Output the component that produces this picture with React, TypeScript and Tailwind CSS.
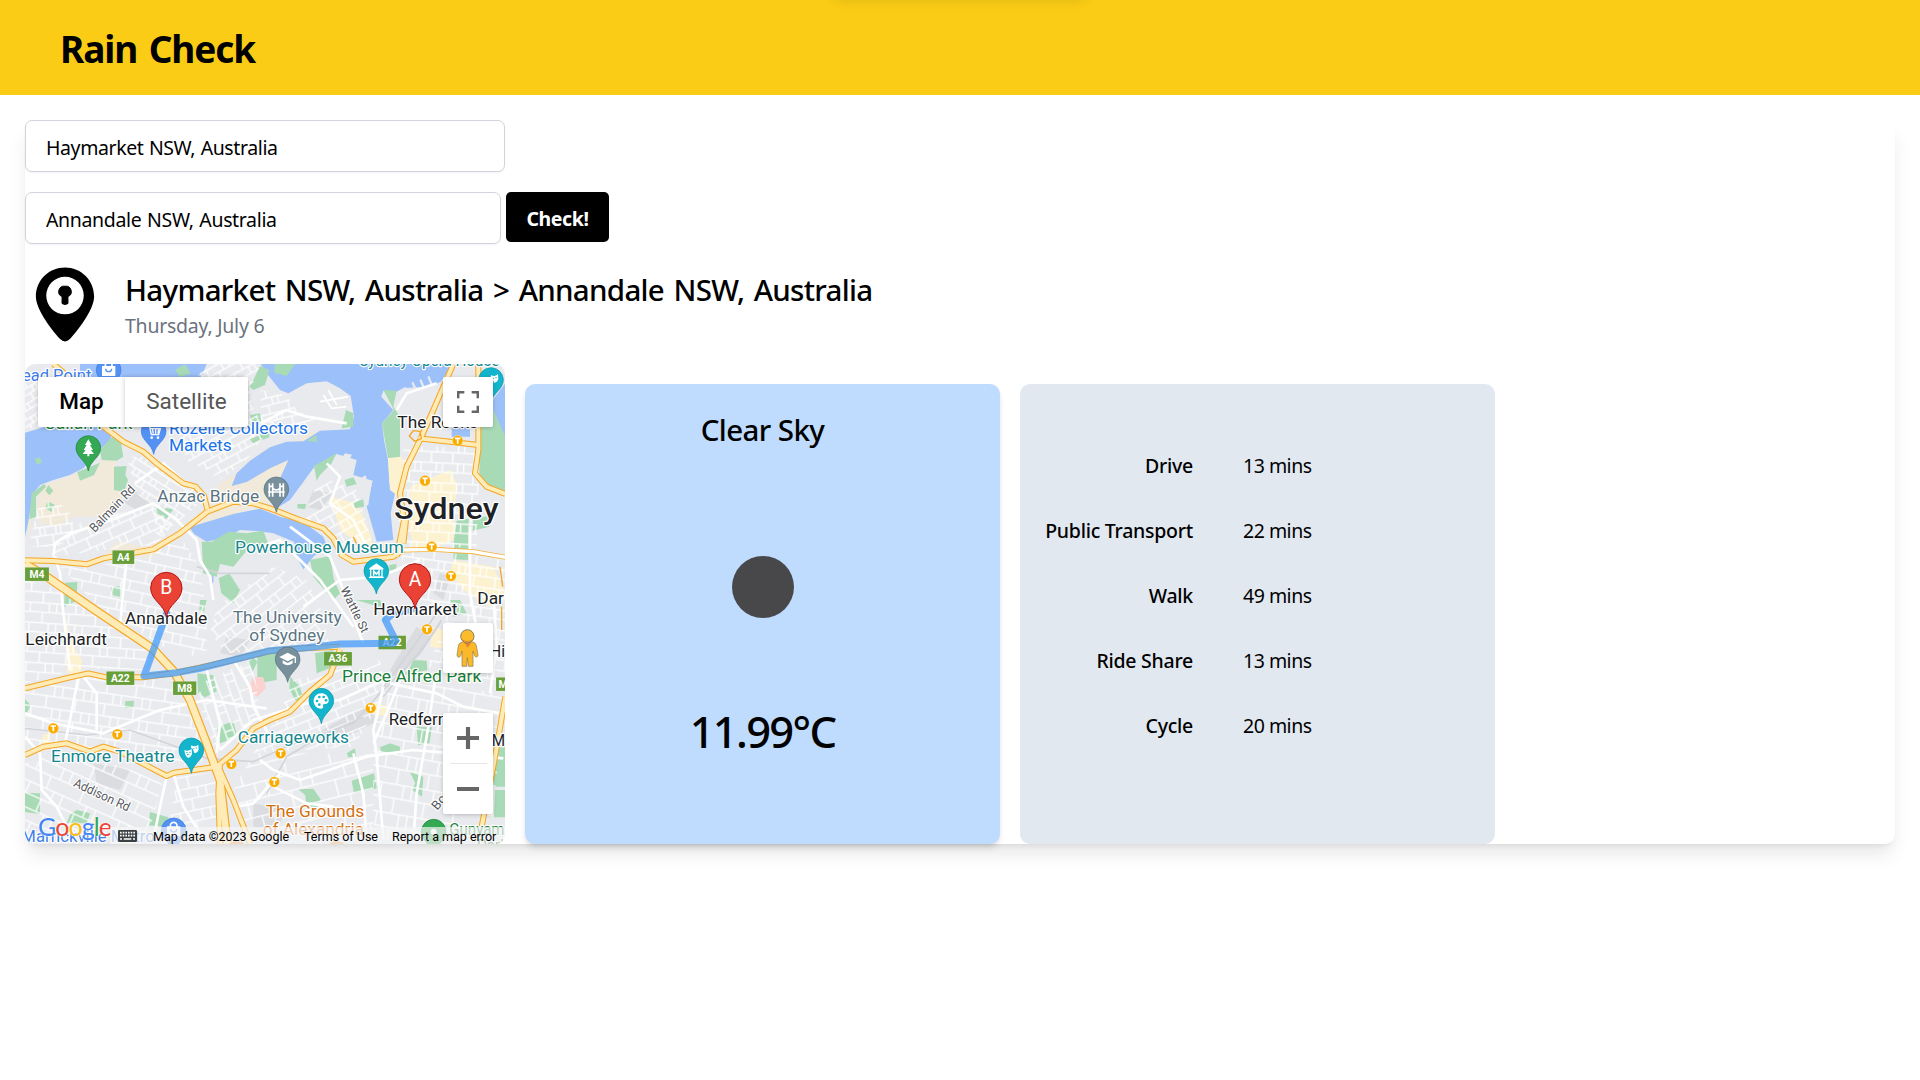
import React from "react";

const WATER = "#9cc0f9";
const GREEN = "#a8dab5";
const TEAL = "#12878f";
const BLUE = "#1a73e8";
const PARK = "#188038";
const SLATE = "#5b7583";
const INK = "#202124";

const waters = [
  "15,218 75,200 275,200 272,240 240,268 190,325 150,345 100,360 60,375 40,400 22,500 15,530",
  "180,12 560,12 540,60 180,60",
  "635,378 650,340 690,302 750,262 800,245 850,244 900,212 950,210 990,208 1002,170 992,108 960,85 920,64 860,70 805,100 780,90 740,40 722,12 1300,12 1262,65 1230,80 1150,84 1128,96 1090,92 1084,110 1120,150 1086,190 1092,240 1104,300 1108,370 1126,395 1112,460 1120,540 1070,545 1040,440 1058,362 1000,345 1010,300 950,282 885,318 810,420 770,445 760,400 805,300 750,325 680,366",
  "508,502 580,480 640,462 720,446 780,470 850,486 910,530 920,555 880,590 850,628 830,590 822,545 760,520 700,512 660,510 620,532 560,545 522,522",
  "1418,120 1456,70 1456,230 1428,205 1410,160",
  "578,560 583,560 580,668 576,668",
];

const greens = [
  "240,270 275,232 300,232 310,290 290,302 245,300",
  "282,320 320,318 316,345 324,360 312,396 282,390",
  "172,336 240,308 222,345 180,362",
  "35,400 72,372 78,380 48,410 48,470 28,478",
  "85,375 100,392 88,406 76,392",
  "82,424 104,434 94,456 76,444",
  "44,296 60,292 66,308 52,314",
  "465,30 495,12 512,40 480,52",
  "690,80 720,18 748,30 735,75 700,90",
  "690,165 720,160 724,190 700,200",
  "690,238 748,212 748,232 700,250",
  "410,440 460,448 440,476 412,460",
  "545,545 575,545 625,515 680,520 730,512 748,560 690,560 640,620 600,612 590,650 550,640",
  "596,655 628,640 660,690 640,728 604,700",
  "135,668 172,666 170,722 132,740",
  "272,682 300,678 300,710 278,706",
  "765,12 825,12 800,48 762,38",
  "978,150 1000,160 1000,200 965,205",
  "860,242 890,225 890,246",
  "882,318 950,280 935,310 900,345 890,362",
  "1090,90 1130,92 1120,140 1140,170 1140,290 1104,294 1086,190 1122,150",
  "1376,180 1420,150 1456,230 1456,395 1400,380 1378,340",
  "974,360 1000,352 1010,372 980,380",
  "1000,428 1030,418 1032,440 1005,445",
  "832,432 858,432 855,448 832,445",
  "870,600 930,588 942,660 960,700 940,720 880,650",
  "1310,482 1346,476 1344,600 1300,598 1302,540",
  "1360,470 1408,470 1408,500 1358,512",
  "1108,615 1130,612 1128,630 1108,632",
  "1008,720 1080,720 1100,760 1090,790 1090,744",
  "540,720 560,720 552,755 538,750",
  "532,940 580,946 590,994 556,1012 534,1000",
  "316,1024 342,1022 340,1044 314,1044",
  "590,1102 640,1084 652,1130 600,1150",
  "15,1018 32,1036 15,1070",
  "15,1298 60,1300 60,1362 15,1356",
  "170,1350 210,1360 200,1390 140,1390 150,1364",
  "390,1356 445,1372 430,1400 386,1396",
  "684,910 700,892 712,905 698,935",
  "712,880 740,866 770,880 770,960 712,970",
  "885,880 940,870 940,920 890,940",
  "810,950 840,980 852,1026 825,1020 808,985",
  "1180,900 1220,902 1222,930 1150,946 1170,922",
  "995,1262 1062,1240 1070,1285 1002,1300",
  "1190,1100 1236,1102 1228,1150 1194,1156",
  "1170,1236 1210,1250 1206,1310 1176,1290 1186,1270",
  "835,1288 880,1286 902,1318 890,1345 858,1334 856,1306",
  "1080,1162 1110,1150 1140,1160 1140,1180 1084,1175",
  "980,1180 1005,1165 1008,1190 985,1192",
  "1425,1165 1456,1160 1456,1280 1420,1280",
  "1425,1290 1456,1290 1456,1372 1422,1372",
  "1290,720 1320,720 1340,760 1300,770",
];

const tans = [
  "22,540 28,480 50,440 62,378 150,350 190,328 178,360 222,348 242,298 290,302 282,390 318,400 350,346 300,440 230,470 160,470 110,500 60,490 50,440",
  "290,545 380,560 410,550 470,512 560,440 640,405 700,310 750,318 805,298 800,345 780,380 810,420 760,425 700,440 640,465 580,480 500,510 430,560 400,590 250,590",
  "600,370 650,340 690,300 750,262 820,248 880,212 900,225 870,244 800,262 700,330 640,400 560,420",
];

const yellows = [
  "1104,294 1145,290 1160,330 1150,420 1110,390",
  "1170,380 1290,330 1310,370 1300,540 1250,560 1180,570 1165,480",
  "930,410 1010,430 1050,520 1060,570 1010,545 960,510",
  "135,770 160,860 185,900 185,945 142,940 140,860",
  "1300,600 1420,620 1456,700 1410,740 1330,690 1290,640",
  "1240,800 1330,830 1370,960 1340,970 1300,870 1230,860",
  "68,1125 90,1120 92,1150 66,1160",
  "1060,1030 1110,1040 1100,1070 1050,1060",
];

const greys = [
  "330,380 400,430 350,450 300,420",
  "880,390 940,400 900,450 860,440",
  "620,830 690,840 660,890 600,880",
  "220,1210 330,1230 300,1290 230,1270",
  "1030,1040 1080,1080 980,1130 890,1120",
  "1190,800 1230,830 1130,960 1110,930",
  "700,1330 800,1350 770,1410 700,1400",
  "1260,640 1290,650 1270,720 1240,700",
];

/** Residential blocks: polygon, rotation and block size of the local streets. */
const districts: { area: string; angle: number; w: number; h: number }[] = [
  { area: "15,60 62,60 62,190 15,220", angle: -32, w: 26, h: 20 },
  { area: "560,12 722,12 690,90 700,160 760,190 740,220 680,300 600,360 560,330 500,300 460,150", angle: -28, w: 34, h: 24 },
  { area: "320,290 400,290 520,390 540,430 410,540 400,450 350,400", angle: 32, w: 30, h: 22 },
  { area: "60,420 120,430 160,470 160,530 110,560 25,560 40,500", angle: -8, w: 24, h: 28 },
  { area: "190,480 400,440 470,500 400,555 250,570 100,590 110,550", angle: -24, w: 36, h: 30 },
  { area: "15,660 90,680 240,770 400,880 370,930 190,925 15,970", angle: 4, w: 40, h: 30 },
  { area: "120,620 280,610 480,530 540,620 560,760 560,900 430,860 240,745", angle: 12, w: 46, h: 32 },
  { area: "590,740 690,670 760,620 860,660 900,740 930,860 620,880 570,820", angle: -38, w: 42, h: 30 },
  { area: "15,990 200,950 460,960 540,1100 560,1200 440,1230 300,1160 15,1170", angle: 8, w: 44, h: 34 },
  { area: "15,1210 140,1170 430,1260 380,1440 15,1440", angle: 24, w: 54, h: 38 },
  { area: "470,1250 590,1235 640,1440 440,1440", angle: -12, w: 46, h: 34 },
  { area: "560,960 700,900 720,1070 590,1180 530,1010", angle: 70, w: 40, h: 28 },
  { area: "820,960 1080,900 1100,1000 1000,1160 700,1180 780,1060", angle: -22, w: 44, h: 26 },
  { area: "700,1180 1060,1180 1060,1440 690,1440 640,1290", angle: -14, w: 68, h: 50 },
  { area: "1080,960 1456,1000 1410,1440 1060,1440 1060,1130", angle: 10, w: 46, h: 44 },
  { area: "1140,560 1456,600 1456,980 1220,920 1280,780 1160,700", angle: 8, w: 32, h: 30 },
  { area: "1150,260 1380,260 1370,560 1130,570", angle: 3, w: 32, h: 30 },
  { area: "900,350 1010,390 1060,560 960,560 850,470", angle: -30, w: 38, h: 30 },
  { area: "722,90 800,105 830,150 900,190 800,200 722,190", angle: -14, w: 30, h: 24 },
];

const streets = [
  "100,590 105,550 150,520 260,485 400,430 470,480 530,540 540,600 570,650 580,720",
  "345,370 430,310 520,390",
  "105,590 120,640 128,740 150,930",
  "320,600 310,690 300,800",
  "175,950 150,1080 135,1150",
  "15,1060 100,1090 250,1120 420,1050 560,1020 740,1045",
  "190,950 230,1000 230,1110",
  "640,900 690,980 700,1040 750,1130",
  "560,930 600,1090 590,1180",
  "720,1200 760,1230 840,1260 900,1240 1040,1190 1180,1170 1300,1180 1450,1195",
  "1090,980 1060,1110 1070,1190 1090,1440",
  "1140,960 1100,1060 1060,1150",
  "1110,970 1250,1000 1330,1040 1440,1060",
  "1245,960 1225,1100 1190,1300 1180,1440",
  "1350,500 1350,700 1380,860",
  "720,560 780,540 900,660 1000,800",
  "810,500 930,590 970,690 1010,800 1030,850",
  "850,740 960,660 1080,650 1200,600",
  "600,1170 700,1080 860,1030 960,1020 1090,960",
  "780,1240 700,1330 650,1340",
  "760,1280 860,1330 940,1340",
  "920,310 960,350 930,430 1000,480 1040,560",
  "1130,150 1160,100 1250,70",
  "15,1130 60,1180 65,1290 110,1340 160,1440",
  "440,1250 420,1340 400,1440",
  "460,1240 490,1340 540,1420",
  "1420,700 1430,860 1410,1000",
  "1000,1180 1030,1300 1040,1440",
  "722,190 800,150 860,170 980,190",
];

const railways = [
  "15,1105 200,1125 330,1110 440,1150 560,1195 700,1205 800,1160 880,1130 1000,1090 1080,1000 1200,880 1260,790",
  "740,1300 800,1190 900,1130 1030,1070",
  "1070,1010 1180,860 1250,760",
  "1090,1010 1210,860 1265,780",
  "530,620 600,640 750,640",
];

const highways = [
  "100,12 145,50 250,200 310,245 370,275 412,312 490,370 527,380 552,408 562,448",
  "15,601 100,603 200,613 250,595 400,568 480,520 562,455 640,425 700,430 750,445 840,480 910,505 940,535 965,585 1000,605 1120,590 1150,570",
  "15,1185 70,1160 140,1150 210,1175 250,1160 300,1175 440,1248 462,1238 590,1220 650,1170 700,1105 750,1080 810,1055 870,995 930,945 960,868",
  "15,985 150,952 205,940 260,952 370,952 470,938 620,905 750,873 860,864 960,860",
  "1195,235 1290,245 1375,255",
  "1300,12 1240,150 1200,240 1160,320 1140,400 1152,480 1140,540 1130,590",
  "1375,12 1375,270 1365,340 1400,380 1456,402",
  "600,1230 640,1320 690,1450",
  "600,1210 595,1300 600,1450",
  "1456,1010 1420,1220 1385,1400",
  "1150,550 1158,480",
];

const motorway = "15,612 80,650 225,750 400,868 462,935 510,1020 560,1150 600,1260 622,1450";
const route = "440,760 372,948 470,938 540,925 620,905 750,872 860,863 960,852 1120,850 1127,842 1096,780 1120,760 1185,745";

type LabelProps = {
  x: number;
  y: number;
  len?: number;
  size?: number;
  color?: string;
  rotate?: number;
  weight?: number;
  children: string;
};

function Label({ x, y, len, size = 47, color = INK, rotate = 0, weight = 400, children }: LabelProps) {
  return (
    <text
      x={x}
      y={y}
      textLength={len}
      lengthAdjust="spacingAndGlyphs"
      fontSize={size}
      fontWeight={weight}
      fill={color}
      stroke="#ffffff"
      strokeWidth={7}
      strokeLinejoin="round"
      paintOrder="stroke"
      transform={rotate ? `rotate(${rotate} ${x} ${y})` : undefined}
    >
      {children}
    </text>
  );
}

function Shield({ x, y, w, children }: { x: number; y: number; w: number; children: string }) {
  return (
    <g>
      <rect x={x} y={y} width={w} height={41} fill="#689f38" stroke="#fff" strokeOpacity={0.5} strokeWidth={1} />
      <text x={x + w / 2} y={y + 31} textAnchor="middle" fontSize={31} fontWeight={700} fill="#fff">
        {children}
      </text>
    </g>
  );
}

function Pin({ x, y, color, edge, children }: { x: number; y: number; color: string; edge: string; children?: React.ReactNode }) {
  return (
    <g transform={`translate(${x} ${y})`}>
      <path d="M0 69C-5 38-37 28-37 0A37 37 0 0 1 37 0C37 28 5 38 0 69Z" fill={color} stroke={edge} strokeWidth={2} />
      {children}
    </g>
  );
}

function Marker({ x, y, children }: { x: number; y: number; children: string }) {
  return (
    <g transform={`translate(${x} ${y})`}>
      <path d="M0 88C-5 48-47 38-47 0A47 47 0 0 1 47 0C47 38 5 48 0 88Z" fill="#ea4335" stroke="#b31412" strokeWidth={3} />
      <text x={0} y={19} textAnchor="middle" fontSize={58} fill="#fff">
        {children}
      </text>
    </g>
  );
}

function Station({ x, y }: { x: number; y: number }) {
  return (
    <g>
      <circle cx={x} cy={y} r={16} fill="#f9ab00" stroke="#fff" strokeWidth={1} />
      <path d={`M${x - 8} ${y - 7}h16M${x} ${y - 7}v16`} stroke="#fff" strokeWidth={5} fill="none" />
    </g>
  );
}

const bag = (
  <g>
    <path d="M-20-12H20V18H-20Z" fill="#fff" />
    <path d="M-10-10V-14A10 10 0 0 1 10-14V-10" fill="none" stroke="#fff" strokeWidth={5} />
    <path d="M-9-4A9 9 0 0 0 9-4" fill="none" stroke="#5491f5" strokeWidth={4} />
  </g>
);

const masks = (
  <g fill="#fff">
    <path d="M-21-1Q-10 5 1-4L2 11Q-3 23-10 22Q-19 19-21-1Z" />
    <path d="M0-15Q10-8 21-17L22-2Q17 9 9 8L4-5L-1-7Z" />
    <path d="M-15 7h4M-6 6h4M6-5h3M13-7h4M-13 14q4-4 7-1" stroke="#12b5cb" strokeWidth={3} fill="none" />
  </g>
);

function CityMap() {
  return (
    <svg className="block h-full w-full" viewBox="15 12 1440 1440" fontFamily="Roboto, sans-serif">
      <defs>
        {districts.map((d, i) => (
          <pattern key={i} id={`blocks-${i}`} width={d.w * 2} height={d.h * 2} patternUnits="userSpaceOnUse" patternTransform={`rotate(${d.angle})`}>
            <path d={`M0 2H${d.w * 2}M0 ${d.h}H${d.w * 2}M2 0V${d.h}M${d.w} ${d.h}V${d.h * 2}M${d.w * 1.5} 0V${d.h}`} stroke="#fff" strokeOpacity={0.85} strokeWidth={4.5} fill="none" />
          </pattern>
        ))}
      </defs>
      <rect x={15} y={12} width={1440} height={1440} fill="#e8eaed" />
      {greys.map((p) => (
        <polygon key={p} points={p} fill="#dadce0" />
      ))}
      {tans.map((p) => (
        <polygon key={p} points={p} fill="#f1e9d9" />
      ))}
      {waters.map((p) => (
        <polygon key={p} points={p} fill={WATER} />
      ))}
      {yellows.map((p) => (
        <polygon key={p} points={p} fill="#fdf2d0" />
      ))}
      {/* wharves */}
      <g fill="#e8eaed">
        <path d="M935 335L975 280L996 284L965 345L940 365ZM1018 360L1035 346L1040 352L1018 430L1010 425ZM1040 365L1056 362L1045 435L1034 438Z" />
        <path d="M1150 85L1156 80L1176 120L1168 126ZM1174 68L1180 65L1202 110L1194 114ZM1198 60L1204 58L1222 98L1215 102ZM1222 50L1228 48L1244 88L1238 90Z" />
        <path d="M1130 150L1150 125L1240 92L1262 66L1240 150L1200 240L1150 250L1130 200Z" />
        <path d="M1295 205H1310V180H1350V230H1295Z" fill={WATER} />
      </g>
      {greens.map((p) => (
        <polygon key={p} points={p} fill={GREEN} />
      ))}
      <polygon points="700,950 730,952 738,985 712,1010 674,984 690,975" fill="#fad2cf" />
      {districts.map((d, i) => (
        <polygon key={i} points={d.area} fill={`url(#blocks-${i})`} />
      ))}
      <path d="M900 125L985 110M910 105L935 145L980 140M925 90L950 135" stroke="#fff" strokeWidth={5} fill="none" />
      <g fill="none" stroke="#d3d5da" strokeWidth={5}>
        {railways.map((p) => (
          <polyline key={p} points={p} />
        ))}
      </g>
      <g fill="none" stroke="#fff" strokeWidth={8} strokeLinejoin="round">
        {streets.map((p) => (
          <polyline key={p} points={p} />
        ))}
      </g>
      <g fill="none" strokeLinejoin="round">
        <polyline points="1150,570 1240,568 1360,575 1456,592" stroke="#f6b13a" strokeWidth={15} />
        <polyline points="1150,570 1240,568 1360,575 1456,592" stroke="#fff" strokeWidth={10} />
        <g stroke="#f5a623" strokeWidth={18}>
          {highways.map((p) => (
            <polyline key={p} points={p} />
          ))}
        </g>
        <polyline points={motorway} stroke="#f5a623" strokeWidth={27} />
        <g stroke="#ffebb5" strokeWidth={12}>
          {highways.map((p) => (
            <polyline key={p} points={p} />
          ))}
        </g>
        <polyline points={motorway} stroke="#ffebb5" strokeWidth={20} />
        <path d="M1168 228l12-16 20 2 4 22-20 8zM1000 530l14 30M1440 620l8 60M1445 740v70" stroke="#f5a623" strokeWidth={4} />
      </g>

      <Shield x={277} y={571} w={66}>A4</Shield>
      <Shield x={15} y={622} w={72}>M4</Shield>
      <Shield x={259} y={934} w={84}>A22</Shield>
      <Shield x={459} y={964} w={70}>M8</Shield>
      <Shield x={1075} y={827} w={83}>A22</Shield>
      <Shield x={912} y={876} w={84}>A36</Shield>
      <Shield x={1428} y={952} w={60}>M1</Shield>

      <polyline points={route} fill="none" stroke="#3b97fb" strokeOpacity={0.72} strokeWidth={21} strokeLinejoin="round" strokeLinecap="round" />

      <Station x={1313} y={242} />
      <Station x={1215} y={362} />
      <Station x={1235} y={560} />
      <Station x={1293} y={648} />
      <Station x={100} y={1105} />
      <Station x={292} y={1123} />
      <Station x={634} y={1212} />
      <Station x={1221} y={808} />
      <Station x={1052} y={1044} />
      <Station x={782} y={1180} />
      <Station x={763} y={1266} />

      <Pin x={266} y={30} color="#5491f5" edge="#3a79e0">{bag}</Pin>
      <Pin x={401} y={214} color="#5491f5" edge="#3a79e0">
        <path d="M-20-18h7l6 28h22l5-18h-30M-4-10l3 17M6-10v17M15-10l-2 17" stroke="#fff" strokeWidth={4} fill="none" />
        <circle cx={-6} cy={19} r={4} fill="#fff" />
        <circle cx={13} cy={19} r={4} fill="#fff" />
      </Pin>
      <Pin x={205} y={264} color="#34a853" edge="#188038">
        <path d="M0-26L10-9H5L14 6H8L17 18H3V25H-3V18H-17L-8 6H-14L-5-9H-10Z" fill="#fff" />
      </Pin>
      <Pin x={769} y={388} color="#78909c" edge="#546e7a">
        <path d="M-21-18V22M-11-18V22M11-18V22M21-18V22" stroke="#fff" strokeWidth={5} />
        <path d="M-25 8H25M-21-9H-11M11-9H21M-11-3Q0 7 11-3" stroke="#fff" strokeWidth={5} fill="none" />
      </Pin>
      <Pin x={1069} y={633} color="#12b5cb" edge="#0b93a6">
        <path d="M-21-8L0-23L21-8V-4H-21Z" fill="#fff" />
        <path d="M-17-4V18H17V-4M-22 19H22" stroke="#fff" strokeWidth={4} fill="none" />
        <path d="M-8 14V0L0 9L8 0V14" stroke="#fff" strokeWidth={4.5} fill="none" />
      </Pin>
      <Pin x={803} y={898} color="#78909c" edge="#546e7a">
        <path d="M-25-7L0-20L25-7L0 6ZM-15 3L0 11L15 3V12Q0 24-15 12Z" fill="#fff" />
        <path d="M23-7V11" stroke="#fff" strokeWidth={4} />
      </Pin>
      <Pin x={904} y={1022} color="#12b5cb" edge="#0b93a6">
        <path d="M0-22C-13-22-23-12-23 1S-13 24-1 24C5 24 7 20 5 16S6 10 11 10C19 10 23 4 22-2C21-14 11-22 0-22Z" fill="#fff" />
        <g fill="#12b5cb">
          <circle cx={-13} cy={1} r={4} />
          <circle cx={-6} cy={-11} r={4} />
          <circle cx={7} cy={-11} r={4} />
          <circle cx={14} cy={-1} r={4} />
          <circle cx={-6} cy={12} r={4} />
        </g>
      </Pin>
      <Pin x={514} y={1171} color="#12b5cb" edge="#0b93a6">{masks}</Pin>
      <Pin x={1413} y={60} color="#12b5cb" edge="#0b93a6">{masks}</Pin>
      <Pin x={461} y={1411} color="#5491f5" edge="#3a79e0">{bag}</Pin>
      <Pin x={1241} y={1415} color="#34a853" edge="#188038">
        <circle cx={0} cy={0} r={9} fill="#fff" />
      </Pin>
      <Pin x={950} y={1482} color="#f29a4a" edge="#e37400" />
      <Pin x={650} y={1482} color="#f29a4a" edge="#e37400" />

      <Label x={6} y={63} len={208} color="#3d7de8">ead Point</Label>
      <Label x={1018} y={17} len={420} color={TEAL}>Sydney Opera House</Label>
      <Label x={73} y={207} len={264} color={PARK}>Callan Park</Label>
      <Label x={447} y={223} len={417} color={BLUE}>Rozelle Collectors</Label>
      <Label x={447} y={274} len={188} color={BLUE}>Markets</Label>
      <Label x={412} y={426} len={306} color={SLATE}>Anzac Bridge</Label>
      <Label x={224} y={519} len={178} size={38} color="#55585d" rotate={-46}>Balmain Rd</Label>
      <Label x={1132} y={205} len={242}>The Rocks</Label>
      <Label x={1122} y={477} len={314} size={90} weight={500}>Sydney</Label>
      <Label x={645} y={579} len={506} color={TEAL}>Powerhouse Museum</Label>
      <Label x={961} y={688} len={148} size={36} color="#55585d" rotate={64}>Wattle St</Label>
      <Label x={1372} y={733} len={80}>Dar</Label>
      <Label x={1060} y={764} len={252}>Haymarket</Label>
      <Label x={315} y={792} len={247}>Annandale</Label>
      <Label x={16} y={854} len={245}>Leichhardt</Label>
      <Label x={638} y={790} len={327} color={SLATE}>The University</Label>
      <Label x={688} y={843} len={225} color={SLATE}>of Sydney</Label>
      <Label x={966} y={967} len={418} color={PARK}>Prince Alfred Park</Label>
      <Label x={1410} y={890}>Hi</Label>
      <Label x={1106} y={1095} len={175}>Redfern</Label>
      <Label x={1415} y={1157} len={40}>M</Label>
      <Label x={653} y={1149} len={334} color={TEAL}>Carriageworks</Label>
      <Label x={93} y={1206} len={371} color={TEAL}>Enmore Theatre</Label>
      <Label x={158} y={1278} len={182} size={38} color="#55585d" rotate={25}>Addison Rd</Label>
      <Label x={1252} y={1352} size={38} color="#55585d" rotate={-50}>Bourke</Label>
      <Label x={737} y={1372} len={296} color="#d5700f">The Grounds</Label>
      <Label x={728} y={1424} len={304} color="#d5700f">of Alexandria</Label>
      <Label x={1288} y={1424} len={190} color={PARK}>Gunyama</Label>
      <Label x={1370} y={1474} color={PARK}>Park</Label>
      <Label x={4} y={1445} len={400} color="#3d7de8">Marrickville Metro</Label>

      <Marker x={439} y={684}>B</Marker>
      <Marker x={1185} y={658}>A</Marker>
    </svg>
  );
}

function Pegman() {
  return (
    <svg className="mr-[2px] h-[39px] w-[23px]" viewBox="0 0 69 117">
      <path
        d="M22 38L12 42Q8 45 7 52L3 78Q3 84 8 85Q12 85 14 80L18 66V112H32L34 86L37 112H51V66L56 80Q58 85 62 84Q66 83 66 78L61 50Q60 43 53 40L46 38Z"
        fill="#fbb829"
        stroke="#8a7a52"
        strokeWidth={2}
      />
      <path d="M24 40H46L35 56Z" fill="#e5842b" />
      <circle cx={34} cy={22} r={20} fill="#fbbc2c" stroke="#6b6b6b" strokeWidth={2.5} />
      <path d="M16 31Q34 44 52 31" stroke="#e08a24" strokeWidth={3} fill="none" />
    </svg>
  );
}

function MapPanel() {
  return (
    <section className="relative h-[480px] w-[480px] shrink-0 overflow-hidden rounded-[10px] font-[Roboto,sans-serif]">
      <CityMap />
      <div className="absolute left-[13px] top-[13px] flex h-[50px] text-[22.5px] leading-[48px] shadow-[0_1px_5px_-1px_rgba(0,0,0,0.3)]">
        <button className="flex w-[87px] justify-center rounded-l-[2px] bg-white font-medium text-black">Map</button>
        <button className="flex w-[123px] justify-center rounded-r-[2px] bg-white text-[#565656] shadow-[-1px_0_4px_rgba(0,0,0,0.15)]">Satellite</button>
      </div>
      <div className="absolute right-[12px] top-[13px] flex size-[50px] items-center justify-center rounded-[2px] bg-white shadow-[0_1px_5px_-1px_rgba(0,0,0,0.3)]">
        <svg className="size-[22px]" viewBox="0 0 18 18" fill="#666">
          <path d="M0 0v6h2V2h4V0H0zm16 0h-4v2h4v4h2V0h-2zm0 16h-4v2h6v-6h-2v4zM2 12H0v6h6v-2H2v-4z" />
        </svg>
      </div>
      <div className="absolute right-[12px] top-[259px] flex size-[50px] items-center justify-center rounded-[2px] bg-white shadow-[0_1px_5px_-1px_rgba(0,0,0,0.3)]">
        <Pegman />
      </div>
      <div className="absolute right-[12px] top-[349px] flex h-[101px] w-[50px] flex-col items-center rounded-[2px] bg-white shadow-[0_1px_5px_-1px_rgba(0,0,0,0.3)]">
        <div className="flex h-[50px] items-center justify-center">
          <svg className="size-[22px]" viewBox="0 0 18 18" fill="#666">
            <path d="M18 7.3h-7.3V0H7.3v7.3H0v3.4h7.3V18h3.4v-7.3H18z" />
          </svg>
        </div>
        <div className="h-px w-[37px] bg-[#e6e6e6]" />
        <div className="flex h-[49px] items-center justify-center">
          <div className="h-[4px] w-[22px] bg-[#666]" />
        </div>
      </div>
      <div className="absolute bottom-[3px] left-[13px] text-[25px] leading-[30px] tracking-[-0.9px] font-[Lato,sans-serif] [text-shadow:0_0_2px_#fff,0_0_2px_#fff]">
        <span className="text-[#4285f4]">G</span>
        <span className="text-[#ea4335]">o</span>
        <span className="text-[#fbbc05]">o</span>
        <span className="text-[#4285f4]">g</span>
        <span className="text-[#34a853]">l</span>
        <span className="text-[#ea4335]">e</span>
      </div>
      <div className="absolute bottom-0 right-0 flex h-[17px] items-center bg-[#f5f5f5]/70 pl-[8px] pr-[7px] text-[12.5px] leading-[15px] text-black">
        <svg className="mr-[16px] h-[12px] w-[19px]" viewBox="0 0 57 36">
          <rect width={57} height={36} rx={4} fill="#3c4043" />
          <path d="M6 8h45M6 17h45" stroke="#fff" strokeWidth={5} strokeDasharray="5 3" />
          <path d="M6 27h6M17 27h23M45 27h6" stroke="#fff" strokeWidth={5} />
        </svg>
        <span className="mr-[14px] w-[137px] whitespace-nowrap pt-[2px]">Map data ©2023 Google</span>
        <span className="mr-[15px] w-[73px] whitespace-nowrap pt-[2px]">Terms of Use</span>
        <span className="w-[106px] whitespace-nowrap pt-[2px]">Report a map error</span>
      </div>
    </section>
  );
}

function PlaceIcon() {
  return (
    <svg className="mt-px h-[75px] w-[60px] shrink-0" viewBox="0 0 60 76">
      <path
        fillRule="evenodd"
        d="M30 0.500C46 0.500 59.500 13 59.500 30C59.500 42 46 61 35 73Q30 78 25 73C14 61 0.500 42 0.500 30C0.500 13 14 0.500 30 0.500ZM30 10A19 19 0 1 0 30 48A19 19 0 1 0 30 10Z"
      />
      <path d="M30 19.500A5.500 5.500 0 0 1 33 30V37Q30 39 27 37V30A5.500 5.500 0 0 1 30 19.500Z" stroke="#000" strokeWidth={1} />
    </svg>
  );
}

const modes = [
  { name: "Drive", time: "13 mins" },
  { name: "Public Transport", time: "22 mins" },
  { name: "Walk", time: "49 mins" },
  { name: "Ride Share", time: "13 mins" },
  { name: "Cycle", time: "20 mins" },
];

export default function App() {
  return (
    <div className="min-h-screen overflow-hidden bg-white text-black font-['Noto_Sans','Open_Sans',sans-serif]">
      <header className="relative flex h-[95px] items-center bg-[#facc15] pl-[60px]">
        <div className="absolute left-[835px] top-[-16px] h-[10px] w-[250px] shadow-[0_4px_14px_rgba(0,0,0,0.16)]" />
        <h1 className="pt-[3px] text-[37px] font-bold tracking-[-1.1px] [word-spacing:3px]">Rain Check</h1>
      </header>
      <main className="m-[25px] h-[724px] rounded-[10px] shadow-[0_12.5px_18.75px_-3.75px_rgba(0,0,0,0.1),0_5px_7.5px_-5px_rgba(0,0,0,0.1)]">
        <input
          className="block h-[52px] w-[480px] rounded-[7px] border border-[#d1d5db] bg-white px-[20px] pt-[3px] text-[19.5px] tracking-[-0.4px] [word-spacing:0.8px] shadow-[0_1px_2px_rgba(0,0,0,0.05)] outline-none"
          defaultValue="Haymarket NSW, Australia"
        />
        <div className="mt-5 flex gap-[5px]">
          <input
            className="block h-[52px] w-[476px] rounded-[7px] border border-[#d1d5db] bg-white px-[20px] pt-[3px] text-[19.5px] tracking-[-0.35px] [word-spacing:1px] shadow-[0_1px_2px_rgba(0,0,0,0.05)] outline-none"
            defaultValue="Annandale NSW, Australia"
          />
          <button className="h-[50px] w-[103px] rounded-[5px] bg-black pt-[4px] text-[19.5px] font-bold tracking-[-0.4px] text-white">Check!</button>
        </div>
        <div className="mt-[22px] flex h-[98px] pl-[10px]">
          <PlaceIcon />
          <div className="ml-[30px]">
            <h2 className="mt-[5px] whitespace-nowrap text-[29.5px] font-medium leading-[38px] tracking-[-0.7px] [word-spacing:2.5px]">
              Haymarket NSW, Australia &gt; Annandale NSW, Australia
            </h2>
            <p className="mt-px text-[19.5px] leading-[32px] tracking-[-0.25px] text-[#6b7280]">Thursday, July 6</p>
          </div>
        </div>
        <div className="flex items-end gap-5">
          <MapPanel />
          <section className="flex h-[460px] w-[475px] flex-col items-center rounded-[10px] bg-[#bfdbfe] shadow-[0_5px_7.5px_-1px_rgba(0,0,0,0.1),0_2px_5px_-2px_rgba(0,0,0,0.1)]">
            <h3 className="mt-[25px] text-[29.5px] font-medium leading-[42px] tracking-[-0.6px]">Clear Sky</h3>
            <div className="mt-[105px] size-[62px] rounded-full bg-[#48484a]" />
            <p className="mt-[82px] text-[43.5px] font-medium leading-[62px] tracking-[-1.7px]">11.99°C</p>
          </section>
          <section className="h-[460px] w-[475px] rounded-[10px] bg-[#e2e8f0] pt-[49px]">
            {modes.map((m) => (
              <div key={m.name} className="flex h-[65px] items-center gap-[50px] text-[19.5px]">
                <span className="w-[173px] whitespace-nowrap text-right font-medium tracking-[-0.25px]">{m.name}</span>
                <span className="tracking-[-0.5px]">{m.time}</span>
              </div>
            ))}
          </section>
        </div>
      </main>
    </div>
  );
}
